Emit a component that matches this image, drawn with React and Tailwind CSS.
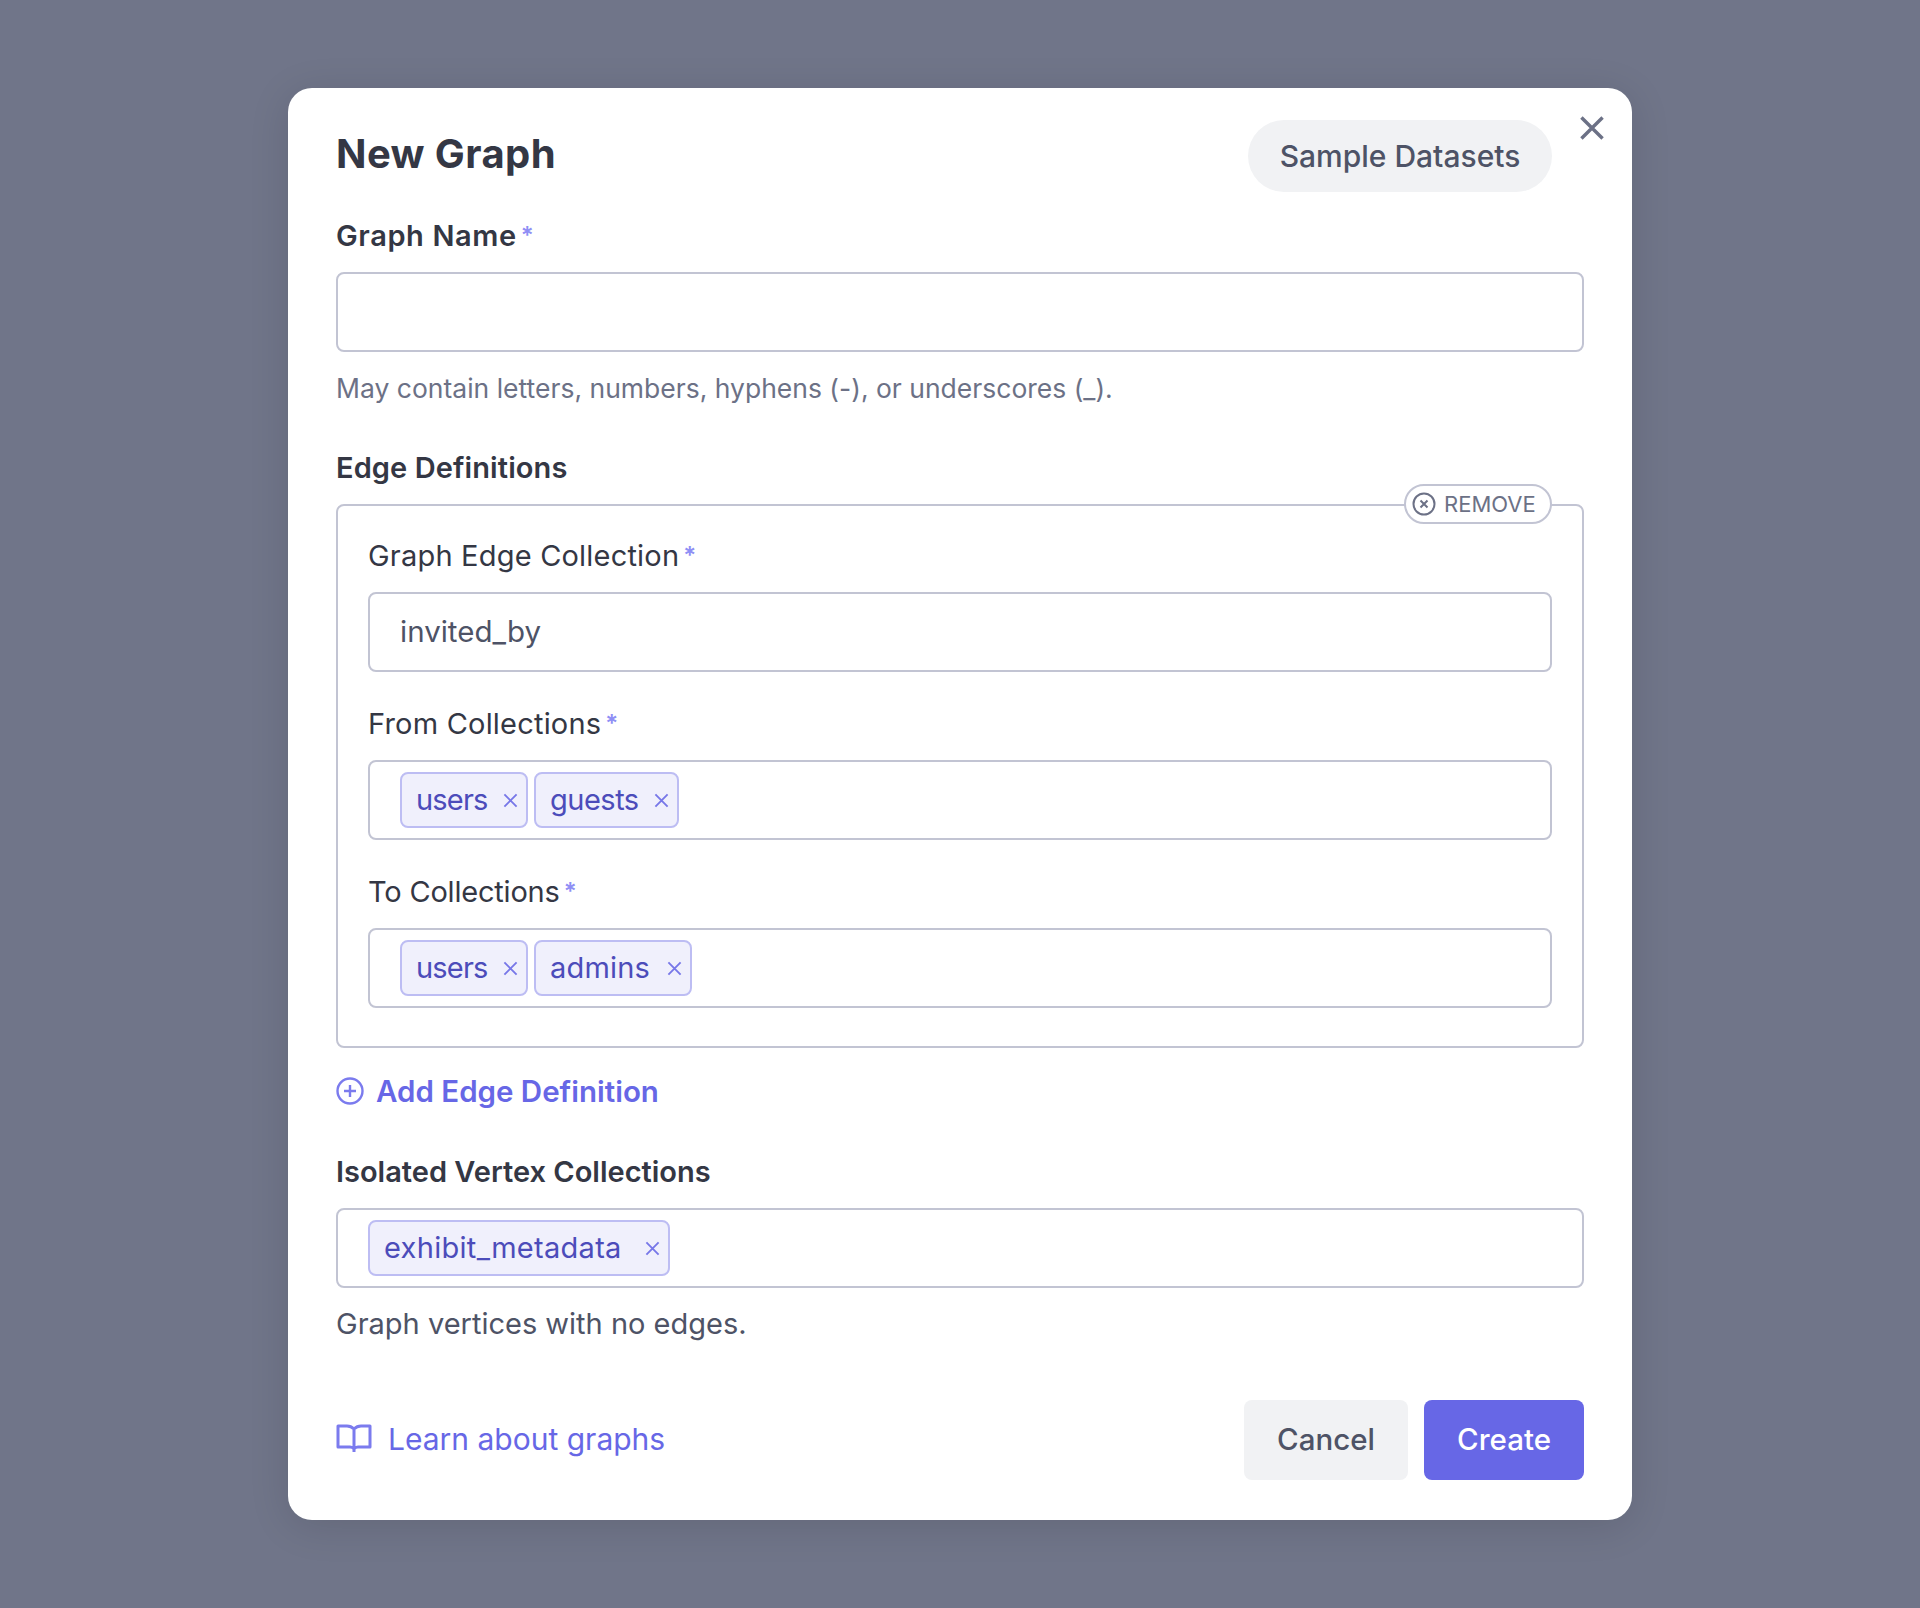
import React from 'react';

const font = 'font-["Inter","Noto_Sans",sans-serif]';

const CrossIcon = ({ className, width = 2 }) => (
  <svg viewBox="0 0 16 16" fill="none" stroke="currentColor" strokeWidth={width} className={className}>
    <path d="M1.5 1.5l13 13M14.5 1.5l-13 13" />
  </svg>
);

const Chip = ({ label, className }) => (
  <span className={`flex h-14 items-center justify-between rounded-lg border-2 border-[#bdbdf3] bg-[#f0f0fc] pl-[14px] pr-[8px] text-[29px] text-[#4c4cba] ${className}`}>
    {label}
    <CrossIcon className="h-[15px] w-[15px] text-[#7777e8]" />
  </span>
);

const Label = ({ children, required, bold, className = 'tracking-[0.2px]' }) => (
  <div className={`mb-4 flex h-10 items-center text-[29px] text-[#343744] ${bold ? 'font-semibold' : ''} ${className}`}>
    {children}
    {required && <span className="ml-[4px] text-[24px] leading-none font-semibold text-[#8f8ff5]">*</span>}
  </div>
);

const ChipInput = ({ children }) => (
  <div className="flex h-20 items-center gap-[6px] rounded-lg border-2 border-[#c2c4d3] pl-[30px]">
    {children}
  </div>
);

export default function App() {
  return (
    <div className={`flex min-h-[1608px] justify-center bg-[#707589] pt-[88px] ${font}`}>
      <div className="relative h-[1432px] w-[1344px] rounded-3xl bg-white px-12 pt-8 shadow-[0_6px_40px_rgba(0,0,0,0.12)]">
        <button className="absolute right-[27px] top-[27px] text-[#6c7186]">
          <CrossIcon className="h-[26px] w-[26px]" width={2.1} />
        </button>

        <div className="flex items-center justify-between pr-8">
          <h1 className="pb-[5px] text-[40px] font-bold tracking-[0.4px] text-[#343744]">New Graph</h1>
          <button className="h-[72px] w-[304px] rounded-full bg-[#f1f2f4] text-[30px] font-medium text-[#4e5366]">
            Sample Datasets
          </button>
        </div>

        <div className="mt-6">
          <Label required bold className="tracking-[0.6px]">Graph Name</Label>
          <div className="h-20 rounded-lg border-2 border-[#c2c4d3]" />
          <p className="mt-4 flex h-10 items-center pt-[2px] text-[26.5px] text-[#6c7186]">
            May contain letters, numbers, hyphens (-), or underscores (_).
          </p>
        </div>

        <div className="mt-10">
          <Label bold className="tracking-[0.1px]">Edge Definitions</Label>
          <div className="relative rounded-lg border-2 border-[#c2c4d3] px-[30px] pb-[38px] pt-[30px]">
            <button className="absolute right-[30px] top-[-22px] flex h-10 w-[148px] items-center rounded-full border-2 border-[#c2c4d3] bg-white pl-[6px] text-[22px] text-[#6c7186]">
              <svg viewBox="0 0 24 24" fill="none" stroke="currentColor" strokeWidth="2" className="mr-[8px] h-6 w-6 shrink-0">
                <circle cx="12" cy="12" r="10.5" />
                <path d="M8.5 8.5l7 7M15.5 8.5l-7 7" />
              </svg>
              REMOVE
            </button>

            <Label required>Graph Edge Collection</Label>
            <div className="flex h-20 items-center rounded-lg border-2 border-[#c2c4d3] pb-[2px] pl-[30px] text-[29.5px] text-[#4e5366]">
              invited_by
            </div>

            <div className="mt-8">
              <Label required>From Collections</Label>
              <ChipInput>
                <Chip label="users" className="w-[128px] tracking-[-0.8px]" />
                <Chip label="guests" className="w-[145px] tracking-[-0.5px]" />
              </ChipInput>
            </div>

            <div className="mt-8">
              <Label required className="tracking-[-0.2px]">To Collections</Label>
              <ChipInput>
                <Chip label="users" className="w-[128px] tracking-[-0.8px]" />
                <Chip label="admins" className="w-[158px] tracking-[0.2px]" />
              </ChipInput>
            </div>
          </div>
        </div>

        <button className="mt-6 flex h-10 items-center pb-[2px] text-[29.5px] font-semibold text-[#6767e6]">
          <svg viewBox="0 0 28 28" fill="none" stroke="currentColor" strokeWidth="2.4" className="mr-3 h-7 w-7 text-[#7b7bee]">
            <circle cx="14" cy="14" r="12.5" />
            <path d="M14 8v12M8 14h12" />
          </svg>
          Add Edge Definition
        </button>

        <div className="mt-10">
          <Label bold className="tracking-[0px]">Isolated Vertex Collections</Label>
          <ChipInput>
            <Chip label="exhibit_metadata" className="w-[302px] tracking-[0.3px]" />
          </ChipInput>
          <p className="mt-4 flex h-10 items-center text-[29px] text-[#4e5366]">Graph vertices with no edges.</p>
        </div>

        <div className="mt-14 flex items-center justify-between">
          <a className="flex items-center pb-[2px] text-[30px] text-[#6767e6]">
            <svg viewBox="0 0 36 30" fill="none" stroke="#7b7bee" strokeWidth="3" strokeLinejoin="round" className="mr-4 h-[30px] w-9">
              <path d="M18 5C16 3 14 2 11 2H2v21h12c2 0 3 .5 4 2 1-1.500 2-2 4-2h12V2h-9c-3 0-5 1-7 3zM18 5v23" />
            </svg>
            Learn about graphs
          </a>
          <div className="flex gap-4">
            <button className="h-20 w-[164px] rounded-lg bg-[#f1f2f4] pb-[2px] text-[29.5px] font-medium text-[#4e5366]">Cancel</button>
            <button className="h-20 w-40 rounded-lg bg-[#6767e6] pb-[2px] text-[29.5px] font-medium text-white">Create</button>
          </div>
        </div>
      </div>
    </div>
  );
}
